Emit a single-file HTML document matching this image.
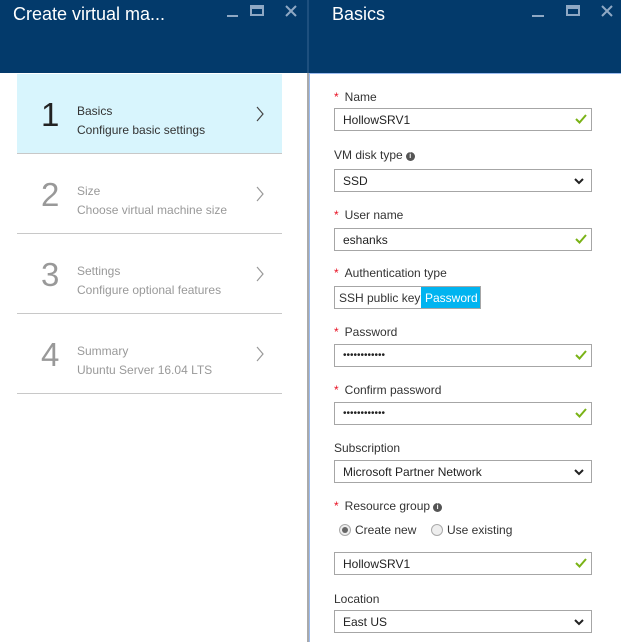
<!DOCTYPE html>
<html><head><meta charset="utf-8"><style>
*{margin:0;padding:0;box-sizing:border-box}
body{width:621px;height:642px;overflow:hidden;background:#fff;font-family:"Liberation Sans",sans-serif;position:relative;color:#333}
.a{position:absolute}
.hdr{background:#033a6b;top:0;height:73px}
.title{color:#fff;font-size:18px;top:4px}
.step{left:17px;width:265px;height:80px;border-bottom:1px solid #c8c8c8}
.num{position:absolute;left:24px;top:22px;font-size:33px;color:#999}
.t1{position:absolute;left:60px;top:30px;font-size:12px;color:#999}
.t2{position:absolute;left:60px;top:49px;font-size:12px;color:#999}
.chev{position:absolute;left:238px;top:32px}
.lbl{left:334px;font-size:12px;color:#333}
.lbl b{color:#e81123;font-weight:normal;margin-right:6px}
.inp{left:334px;width:258px;height:23px;border:1px solid #a6a6a6;font-size:12px;padding:4px 0 0 8px;color:#222}
.ck{position:absolute;right:4px;top:5px}
.dd{position:absolute;right:7px;top:8px}
.info{display:inline-block;width:9px;height:9px;border-radius:50%;background:#555;color:#fff;font-size:7px;text-align:center;line-height:9px;font-weight:bold;margin-left:3px;vertical-align:1px}
</style></head><body>
<div class="a hdr" style="left:0;width:307px"></div>
<div class="a hdr" style="left:309px;width:312px"></div>
<div class="a" style="left:307px;top:0;width:2px;height:73px;background:#1d4f7e"></div>
<div class="a" style="left:307px;top:73px;width:2px;height:569px;background:#aaa"></div>
<div class="a" style="left:309px;top:73px;width:1px;height:569px;background:#9cbcf0"></div>
<div class="a" style="left:309px;top:73px;width:312px;height:1px;background:#9cbcf0"></div>
<div class="a title" style="left:13px">Create virtual ma...</div>
<div class="a title" style="left:332px">Basics</div>
<svg class="a" style="left:0;top:0" width="621" height="30">
<g stroke="#8fa8c4" stroke-width="2" fill="none">
<line x1="227" y1="16" x2="238" y2="16"/><rect x="251" y="6" width="12" height="9"/><line x1="251" y1="8" x2="263" y2="8"/>
<path d="M286 6 L296 16 M296 6 L286 16"/>
<line x1="532" y1="16" x2="544" y2="16"/><rect x="567" y="6" width="12" height="9"/><line x1="567" y1="8" x2="579" y2="8"/>
<path d="M602 6 L612 16 M612 6 L602 16"/></g></svg>

<div class="a step" style="top:74px;background:#d8f5fd;border-bottom-color:#c8c8c8"><div class="num" style="color:#222">1</div><div class="t1" style="color:#333">Basics</div><div class="t2" style="color:#333">Configure basic settings</div><svg class="chev" width="10" height="16"><path d="M2 1 L8 8 L2 15" stroke="#444" fill="none" stroke-width="1.2"/></svg></div>
<div class="a step" style="top:154px"><div class="num">2</div><div class="t1">Size</div><div class="t2">Choose virtual machine size</div><svg class="chev" width="10" height="16"><path d="M2 1 L8 8 L2 15" stroke="#999" fill="none" stroke-width="1.2"/></svg></div>
<div class="a step" style="top:234px"><div class="num">3</div><div class="t1">Settings</div><div class="t2">Configure optional features</div><svg class="chev" width="10" height="16"><path d="M2 1 L8 8 L2 15" stroke="#999" fill="none" stroke-width="1.2"/></svg></div>
<div class="a step" style="top:314px"><div class="num">4</div><div class="t1">Summary</div><div class="t2">Ubuntu Server 16.04 LTS</div><svg class="chev" width="10" height="16"><path d="M2 1 L8 8 L2 15" stroke="#999" fill="none" stroke-width="1.2"/></svg></div>

<div class="a lbl" style="top:90px"><b>*</b>Name</div>
<div class="a inp" style="top:108px">HollowSRV1<svg class="ck" width="12" height="10"><path d="M1 5 L4.5 8.5 L11 1" stroke="#7ab317" stroke-width="2" fill="none"/></svg></div>
<div class="a lbl" style="top:148px">VM disk type<span class="info">i</span></div>
<div class="a inp" style="top:169px">SSD<svg class="dd" width="10" height="7"><path d="M1 1 L5 5 L9 1" stroke="#222" stroke-width="2" fill="none"/></svg></div>
<div class="a lbl" style="top:208px"><b>*</b>User name</div>
<div class="a inp" style="top:228px">eshanks<svg class="ck" width="12" height="10"><path d="M1 5 L4.5 8.5 L11 1" stroke="#7ab317" stroke-width="2" fill="none"/></svg></div>
<div class="a lbl" style="top:266px"><b>*</b>Authentication type</div>
<div class="a" style="left:334px;top:286px;width:147px;height:23px;border:1px solid #a6a6a6;font-size:12px">
<span class="a" style="left:4px;top:4px">SSH public key</span>
<span class="a" style="left:86px;top:0;width:59px;height:21px;background:#00b4f0;color:#fff;padding:4px 0 0 4px">Password</span></div>
<div class="a lbl" style="top:325px"><b>*</b>Password</div>
<div class="a inp" style="top:344px;font-size:10px;padding-top:5px">••••••••••••<svg class="ck" width="12" height="10"><path d="M1 5 L4.5 8.5 L11 1" stroke="#7ab317" stroke-width="2" fill="none"/></svg></div>
<div class="a lbl" style="top:383px"><b>*</b>Confirm password</div>
<div class="a inp" style="top:402px;font-size:10px;padding-top:5px">••••••••••••<svg class="ck" width="12" height="10"><path d="M1 5 L4.5 8.5 L11 1" stroke="#7ab317" stroke-width="2" fill="none"/></svg></div>
<div class="a lbl" style="top:441px">Subscription</div>
<div class="a inp" style="top:460px">Microsoft Partner Network<svg class="dd" width="10" height="7"><path d="M1 1 L5 5 L9 1" stroke="#222" stroke-width="2" fill="none"/></svg></div>
<div class="a lbl" style="top:499px"><b>*</b>Resource group<span class="info">i</span></div>
<svg class="a" style="left:338px;top:523px" width="110" height="14"><circle cx="7" cy="7" r="5.5" fill="#eee" stroke="#aaa"/><circle cx="7" cy="7" r="3" fill="#666"/><circle cx="99" cy="7" r="5.5" fill="#eee" stroke="#aaa"/></svg>
<div class="a lbl" style="left:355px;top:523px">Create new</div>
<div class="a lbl" style="left:447px;top:523px">Use existing</div>
<div class="a inp" style="top:552px">HollowSRV1<svg class="ck" width="12" height="10"><path d="M1 5 L4.5 8.5 L11 1" stroke="#7ab317" stroke-width="2" fill="none"/></svg></div>
<div class="a lbl" style="top:592px">Location</div>
<div class="a inp" style="top:610px">East US<svg class="dd" width="10" height="7"><path d="M1 1 L5 5 L9 1" stroke="#222" stroke-width="2" fill="none"/></svg></div>
</body></html>
